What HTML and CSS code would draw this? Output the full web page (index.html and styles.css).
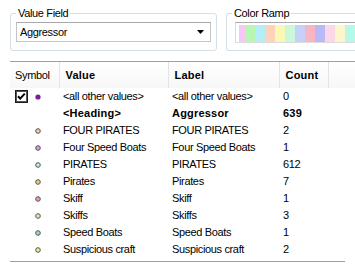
FILE: index.html
```html
<!DOCTYPE html>
<html lang="en">
<head>
  <meta charset="UTF-8" />
  <meta name="viewport" content="width=device-width, initial-scale=1.0"/>
  <title>Symbology - Unique Values</title>
  <link rel="stylesheet" href="styles.css">
</head>
<body>
  <div class="top">
    <fieldset class="group value-field">
      <legend>Value Field</legend>
      <div class="combo">
        <span>Aggressor</span>
        <svg class="arrow" width="7" height="4" viewBox="0 0 7 4"><polygon points="0,0 7,0 3.5,4" fill="#000"/></svg>
      </div>
    </fieldset>
    <fieldset class="group ramp-group">
      <legend>Color Ramp</legend>
      <div class="ramp">
        <span class="sw sw-first c1"></span>
        <span class="sw c2"></span>
        <span class="sw c3"></span>
        <span class="sw c4"></span>
        <span class="sw c5"></span>
        <span class="sw c6"></span>
        <span class="sw c7"></span>
        <span class="sw c8"></span>
        <span class="sw c9"></span>
        <span class="sw c10"></span>
        <span class="sw c11"></span>
        <span class="sw c12"></span>
      </div>
    </fieldset>
  </div>

  <div class="grid">
    <table>
      <colgroup>
        <col class="col-sym"><col class="col-val"><col class="col-lbl"><col class="col-cnt"><col>
      </colgroup>
      <thead>
        <tr>
          <th class="th-sym">Symbol</th>
          <th class="bold">Value</th>
          <th class="bold">Label</th>
          <th class="bold">Count</th>
          <th class="th-last"></th>
        </tr>
      </thead>
      <tbody>
        <tr>
          <td class="sym sym-check">
            <div class="check-wrap">
              <svg width="13" height="13" viewBox="0 0 13 13">
                <rect x="0.5" y="0.5" width="12" height="12" fill="#fff" stroke="#1a1a1a"/>
                <rect x="1.5" y="1.5" width="10" height="10" fill="none" stroke="#555"/>
                <polyline points="3,6.2 5.2,8.6 9.8,3.6" fill="none" stroke="#000" stroke-width="2"/>
              </svg>
              <svg class="mark" width="6" height="6" viewBox="0 0 6 6"><circle cx="3" cy="3" r="2.6" fill="#7a1f9c"/></svg>
            </div>
          </td>
          <td>&lt;all other values&gt;</td>
          <td>&lt;all other values&gt;</td>
          <td>0</td>
          <td></td>
        </tr>
        <tr class="heading">
          <td class="sym"></td>
          <td>&lt;Heading&gt;</td>
          <td>Aggressor</td>
          <td>639</td>
          <td></td>
        </tr>
        <tr>
          <td class="sym"><svg class="mark" width="6" height="6" viewBox="0 0 6 6"><circle cx="3" cy="3" r="2.3" fill="#f6cf93" stroke="#555"/></svg></td>
          <td>FOUR PIRATES</td><td>FOUR PIRATES</td><td>2</td><td></td>
        </tr>
        <tr>
          <td class="sym"><svg class="mark" width="6" height="6" viewBox="0 0 6 6"><circle cx="3" cy="3" r="2.3" fill="#e497ea" stroke="#555"/></svg></td>
          <td>Four Speed Boats</td><td>Four Speed Boats</td><td>1</td><td></td>
        </tr>
        <tr>
          <td class="sym"><svg class="mark" width="6" height="6" viewBox="0 0 6 6"><circle cx="3" cy="3" r="2.3" fill="#bdf3d6" stroke="#555"/></svg></td>
          <td>PIRATES</td><td>PIRATES</td><td>612</td><td></td>
        </tr>
        <tr>
          <td class="sym"><svg class="mark" width="6" height="6" viewBox="0 0 6 6"><circle cx="3" cy="3" r="2.3" fill="#f8c97a" stroke="#555"/></svg></td>
          <td>Pirates</td><td>Pirates</td><td>7</td><td></td>
        </tr>
        <tr>
          <td class="sym"><svg class="mark" width="6" height="6" viewBox="0 0 6 6"><circle cx="3" cy="3" r="2.3" fill="#f29ab8" stroke="#555"/></svg></td>
          <td>Skiff</td><td>Skiff</td><td>1</td><td></td>
        </tr>
        <tr>
          <td class="sym"><svg class="mark" width="6" height="6" viewBox="0 0 6 6"><circle cx="3" cy="3" r="2.3" fill="#d3f2a8" stroke="#555"/></svg></td>
          <td>Skiffs</td><td>Skiffs</td><td>3</td><td></td>
        </tr>
        <tr>
          <td class="sym"><svg class="mark" width="6" height="6" viewBox="0 0 6 6"><circle cx="3" cy="3" r="2.3" fill="#8fe3bd" stroke="#555"/></svg></td>
          <td>Speed Boats</td><td>Speed Boats</td><td>1</td><td></td>
        </tr>
        <tr>
          <td class="sym"><svg class="mark" width="6" height="6" viewBox="0 0 6 6"><circle cx="3" cy="3" r="2.3" fill="#f3ee86" stroke="#555"/></svg></td>
          <td>Suspicious craft</td><td>Suspicious craft</td><td>2</td><td></td>
        </tr>
      </tbody>
    </table>
  </div>
  <div class="grid-foot"></div>
</body>
</html>
```

FILE: styles.css
```css
html, body {
  margin: 0;
  background: #fff;
  overflow: hidden;
}

body {
  width: 355px;
  height: 267px;
  font-family: "Liberation Sans", Arial, sans-serif;
  font-size: 11px;
  letter-spacing: -0.35px;
  color: #000;
}

.top {
  display: flex;
  gap: 9px;
  padding: 6px 0 0 10px;
}

.group {
  margin: 0;
  padding: 2px 5px 7px;
  border: 1px solid #d5dfe5;
  border-radius: 3px;
  min-width: 0;
  box-sizing: border-box;
}

.group legend {
  padding: 0 2px;
  line-height: 14px;
}

.value-field {
  flex: 0 0 207px;
}

.ramp-group {
  flex: 1 1 auto;
  border-right: none;
  border-radius: 3px 0 0 3px;
  padding-right: 0;
}

.combo {
  height: 20px;
  box-sizing: border-box;
  border: 1px solid #c5c5c5;
  border-top-color: #a9a9a9;
  display: flex;
  align-items: center;
  justify-content: space-between;
  padding: 0 6px 0 3px;
}

.arrow {
  display: block;
}

.ramp {
  margin-left: 3px;
  height: 21px;
  box-sizing: border-box;
  border: 1px solid #dcdcdc;
  border-top-color: #a8a8a8;
  border-right: none;
  padding: 2px 0 1px 3px;
  display: flex;
  overflow: hidden;
}

.sw {
  flex: 0 0 10px;
  height: 17px;
}

.sw-first { flex-basis: 6px; }
.c1 { background: #f5c8f6; }
.c2 { background: #b9f6b2; }
.c3 { background: #b5edf9; }
.c4 { background: #fdd3b9; }
.c5 { background: #f9f9b3; }
.c6 { background: #cbf8da; }
.c7 { background: #c7d0f9; }
.c8 { background: #f8b6c2; }
.c9 { background: #bab9f8; }
.c10 { background: #fcd8e6; }
.c11 { background: #fdf6cb; }
.c12 { background: #b6f8e9; }

.grid {
  margin: 10px 0 0 10px;
  height: 199px;
  border-top: 1px solid #a0a0a0;
}

.grid table {
  border-collapse: collapse;
  table-layout: fixed;
  width: 345px;
}

.col-sym { width: 49px; }
.col-val { width: 109px; }
.col-lbl { width: 111px; }
.col-cnt { width: 49px; }

th {
  height: 26px;
  padding: 0 0 0 6px;
  text-align: left;
  font-weight: normal;
  border-right: 1px solid #e4e4e4;
  background: linear-gradient(#fff, #f7f7f7);
  white-space: nowrap;
}

th.th-sym {
  padding-left: 5px;
}

th.th-last {
  border-right: none;
}

.bold {
  font-weight: bold;
  letter-spacing: 0.2px;
}

td {
  height: 17px;
  padding: 0 0 0 4px;
  line-height: 17px;
  white-space: nowrap;
  overflow: hidden;
}

td.sym {
  padding-left: 25px;
}

td.sym svg {
  display: block;
}

td.sym-check {
  padding-left: 5px;
}

.check-wrap {
  display: flex;
  align-items: center;
  gap: 7px;
}

.heading td {
  font-weight: bold;
  letter-spacing: 0.2px;
}

.grid-foot {
  margin: 0 10px 0 10px;
  border-top: 1px solid #a0a0a0;
}
```
